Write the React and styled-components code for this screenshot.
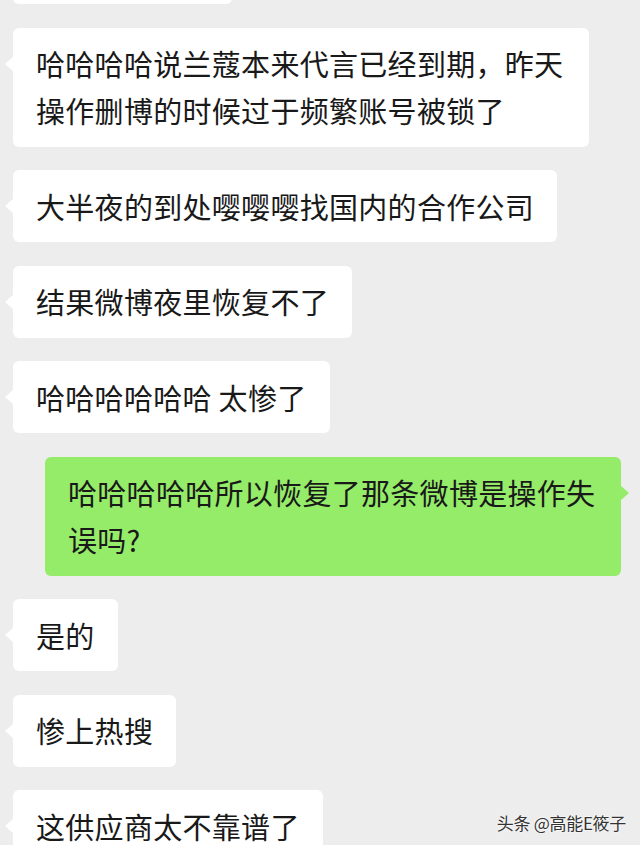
import React from 'react'
import styled, { createGlobalStyle } from 'styled-components'

const GlobalStyle = createGlobalStyle`
  html, body {
    margin: 0;
    padding: 0;
    background: #ededed;
    overflow: hidden;
  }
  body {
    font-family: "Noto Sans CJK SC", "Noto Sans", sans-serif;
  }
`

// first bubble is scrolled mostly out of view, only its bottom edge shows
const messages = [
   { id: 0, mine: false, text: '', blankWidth: 219 },
   { id: 1, mine: false, text: '哈哈哈哈说兰蔻本来代言已经到期，昨天操作删博的时候过于频繁账号被锁了' },
   { id: 2, mine: false, text: '大半夜的到处嘤嘤嘤找国内的合作公司' },
   { id: 3, mine: false, text: '结果微博夜里恢复不了' },
   { id: 4, mine: false, text: '哈哈哈哈哈哈 太惨了' },
   { id: 5, mine: true, text: '哈哈哈哈哈所以恢复了那条微博是操作失误吗?' },
   { id: 6, mine: false, text: '是的' },
   { id: 7, mine: false, text: '惨上热搜' },
   { id: 8, mine: false, text: '这供应商太不靠谱了' },
]

function App() {
   return (
      <>
         <GlobalStyle />
         <Screen>
            <ChatList>
               {messages.map(m => (
                  <Row key={m.id} $mine={m.mine}>
                     <Bubble $mine={m.mine} $blank={m.blankWidth}>{m.text}</Bubble>
                  </Row>
               ))}
            </ChatList>
            <Watermark>头条 @高能E筱子</Watermark>
         </Screen>
      </>
   )
}

const Screen = styled.div`
  position: relative;
  width: 640px;
  height: 845px;
  overflow: hidden;
  background: #ededed;
`

const ChatList = styled.div`
  display: flex;
  flex-direction: column;
  gap: 23.5px;
  margin-top: -68px;
  padding: 0 19px 0 13px;
`

const Row = styled.div`
  display: flex;
  justify-content: ${p => (p.$mine ? 'flex-end' : 'flex-start')};
`

const Bubble = styled.div`
  position: relative;
  box-sizing: border-box;
  max-width: 576px;
  padding: 12.5px 23px;
  border-radius: 6px;
  background: ${p => (p.$mine ? '#95ec69' : '#ffffff')};
  color: #191919;
  font-size: 29px;
  line-height: 47px;
  letter-spacing: 0.3px;
  word-break: break-all;
  ${p => p.$blank && `width: ${p.$blank}px; height: 72px;`}

  &::before {
    content: '';
    position: absolute;
    top: 29px;
    ${p => (p.$mine ? 'right: -8px;' : 'left: -8px;')}
    border-top: 7px solid transparent;
    border-bottom: 7px solid transparent;
    ${p => (p.$mine
      ? 'border-left: 8px solid #95ec69;'
      : 'border-right: 8px solid #ffffff;')}
  }
`

const Watermark = styled.div`
  position: absolute;
  right: 14px;
  bottom: 10px;
  font-size: 17px;
  color: #333;
  letter-spacing: -0.3px;
  text-shadow: 0 0 2px #fff, 0 0 2px #fff;
`

export default App
